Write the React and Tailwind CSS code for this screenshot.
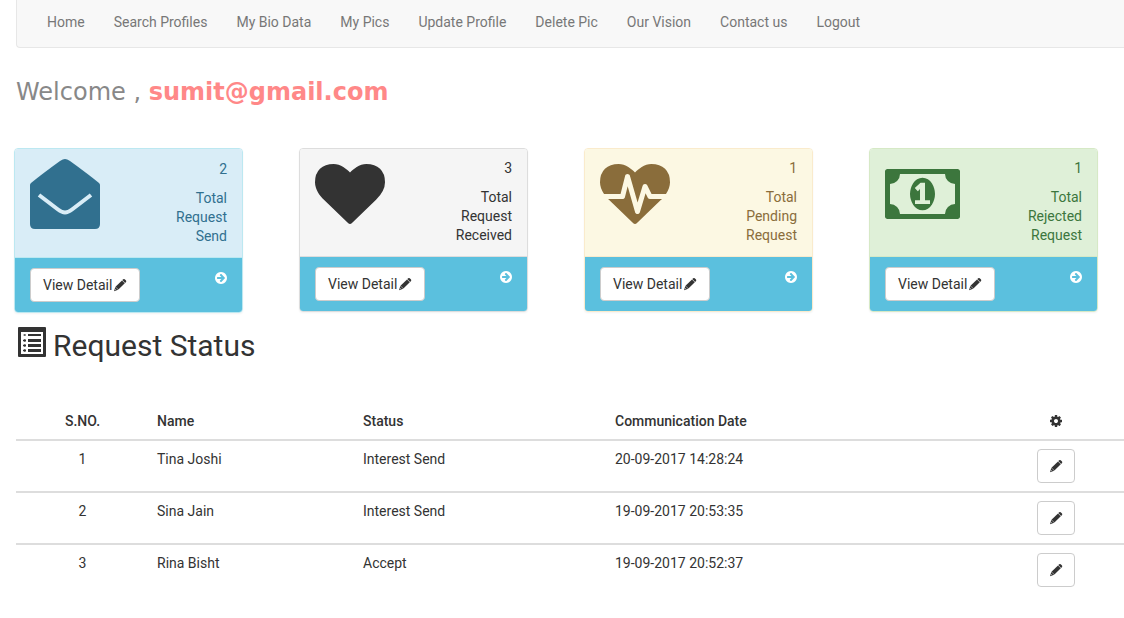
const paths = {
  heart:
    'M896 1664q-26 0-44-18l-624-602q-10-8-27.5-26t-55.5-65.5-68-97.5-53.5-121-23.5-138q0-220 127-344t351-124q62 0 126.5 21.5t120 58 95.5 68.5 76 68q36-36 76-68t95.5-68.5 120-58 126.5-21.5q224 0 351 124t127 344q0 221-229 450l-623 600q-18 18-44 18z',
  heartbeat:
    'M1280 1024h305q-5 6-10 10.5t-9 7.5l-3 4-623 600q-18 18-44 18t-44-18l-624-602q-5-2-21-20h369q22 0 39.5-13.5t22.5-34.5l70-281 190 667q6 20 23 33t39 13q21 0 38-13t23-33l146-485 56 112q18 35 57 35zm512-428q0 145-103 300h-369l-111-221q-8-17-25.5-27t-36.5-8q-45 5-56 46l-129 430-196-686q-6-20-23.5-33t-39.5-13-39 13.5-22 34.5l-116 464h-423q-103-155-103-300q0-220 127-344t351-124q62 0 126.5 21.5t120 58 95.5 68.5 76 68q36-36 76-68t95.5-68.5 120-58 126.5-21.5q224 0 351 124t127 344z',
  money:
    'M768 1152h384v-96h-128v-448h-114l-148 137 77 80q42-37 55-57h2v288h-128v96zm512-256q0 70-21 142t-59.5 134-101.5 101-138 39-138-39-101.5-101-59.5-134-21-142 21-142 59.5-134 101.5-101 138-39 138 39 101.5 101 59.5 134 21 142zm512 256v-512q-106 0-181-75t-75-181h-1152q0 106-75 181t-181 75v512q106 0 181 75t75 181h1152q0-106 75-181t181-75zm128-832v1152q0 26-19 45t-45 19h-1792q-26 0-45-19t-19-45v-1152q0-26 19-45t45-19h1792q26 0 45 19t19 45z',
  arrow:
    'M1413 896q0-27-18-45l-91-91-362-362q-18-18-45-18t-45 18l-91 91q-18 18-18 45t18 45l189 189h-502q-26 0-45 19t-19 45v128q0 26 19 45t45 19h502l-189 189q-18 18-18 45t18 45l91 91q18 18 45 18t45-18l362-362 91-91q18-18 18-45zm251 0q0 209-103 385.5t-279.5 279.5-385.5 103-385.5-103-279.5-279.5-103-385.5 103-385.5 279.5-279.5 385.5-103 385.5 103 279.5 279.5 103 385.5z',
  cog:
    'M1152 896q0-106-75-181t-181-75-181 75-75 181 75 181 181 75 181-75 75-181zm512-109v222q0 12-8 23t-20 13l-185 28q-19 54-39 91 35 50 107 138 10 12 10 25t-9 23q-27 37-99 108t-94 71q-12 0-26-9l-138-108q-44 23-91 38-16 136-29 186-7 28-36 28h-222q-14 0-24.500-8.500t-11.500-21.500l-28-184q-49-16-90-37l-141 107q-10 9-25 9-14 0-25-11-126-114-165-168-7-10-7-23 0-12 8-23 15-21 51-66.500t54-70.500q-27-50-41-99l-183-27q-13-2-21-12.500t-8-23.500v-222q0-12 8-23t19-13l186-28q14-46 39-92-40-57-107-138-10-12-10-24 0-10 9-23 26-36 98.500-107.500t94.500-71.500q13 0 26 10l138 107q44-23 91-38 16-136 29-186 7-28 36-28h222q14 0 24.500 8.500t11.500 21.500l28 184q49 16 90 37l142-107q9-9 24-9 13 0 25 10 129 119 165 170 7 8 7 22 0 12-8 23-15 21-51 66.500t-54 70.500q26 50 41 98l183 28q13 2 21 12.500t8 23.500z',
};

function Icon({ name, width = 1792, className }) {
  return (
    <svg viewBox={`0 0 ${width} 1792`} fill="currentColor" fillRule="evenodd" className={className} aria-hidden="true">
      <path d={paths[name]} />
    </svg>
  );
}

function Pencil() {
  return (
    <svg viewBox="0 0 14 14" fill="currentColor" className="size-3.5" aria-hidden="true">
      <path d="M9.300 2.100L10.200 1.200Q11 .600 11.700 1.200L13 2.500Q13.600 3.200 13 4L12.100 4.900Z" />
      <path d="M9 2.500L11.800 5.300L5.400 11.600L2.500 8.700Z" />
      <path fillRule="evenodd" d="M2.300 8.900L5.200 11.800L1 13.200ZM2.500 11L2.100 12.100L3.200 11.700Z" />
    </svg>
  );
}

function EnvelopeOpen() {
  return (
    <svg viewBox="0 0 70 70" className="size-[70px]" aria-hidden="true">
      <path
        fill="currentColor"
        d="M0 26Q0 25 1 24Q12 15 30 2Q33 0 35 0Q37 0 40 2Q58 15 69 24Q70 25 70 26V65Q70 70 65 70H5Q0 70 0 65Z"
      />
      <path fill="none" stroke="#d9edf7" strokeWidth="4" d="M9 36L28 50.500Q32 53.500 35 53.500Q38 53.500 42 50.500L61 36" />
    </svg>
  );
}

function ListAlt() {
  return (
    <svg viewBox="0 0 28 30" fill="currentColor" className="h-[30px] w-7" aria-hidden="true">
      <path fillRule="evenodd" d="M1 0H27Q28 0 28 1V29Q28 30 27 30H1Q0 30 0 29V1Q0 0 1 0ZM3 5V27H25V5Z" />
      <path d="M5 8l2-1 1 1-1 1zM5 13l2-1 1 1v1l-1 1-2-1zM5 18l2-1 1 1v1l-1 1-2-1zM5 23l2-1 1 1v1l-1 1-2-1z" />
      <path d="M10 7h13v2H10zM10 12h13v3H10zM10 17h13v3H10zM10 22h13v3H10z" />
    </svg>
  );
}

const links = ['Home', 'Search Profiles', 'My Bio Data', 'My Pics', 'Update Profile', 'Delete Pic', 'Our Vision', 'Contact us', 'Logout'];

const cards = [
  { count: 2, words: ['Total', 'Request', 'Send'], tone: 'border-[#bce8f1]', head: 'bg-[#d9edf7] text-[#31708f] border-[#bce8f1]', text: 'pt-px', icon: <EnvelopeOpen /> },
  { count: 3, words: ['Total', 'Request', 'Received'], tone: 'border-[#dddddd]', head: 'bg-[#f5f5f5] text-[#333333] border-[#dddddd]', icon: <Icon name="heart" className="size-[70px]" /> },
  { count: 1, words: ['Total', 'Pending', 'Request'], tone: 'border-[#faebcc]', head: 'bg-[#fcf8e3] text-[#8a6d3b] border-[#faebcc]', icon: <Icon name="heartbeat" className="size-[70px]" /> },
  { count: 1, words: ['Total', 'Rejected', 'Request'], tone: 'border-[#d6e9c6]', head: 'bg-[#dff0d8] text-[#3c763d] border-[#d6e9c6]', icon: <Icon name="money" width={1920} className="h-[70px] w-[75px]" /> },
];

const rows = [
  [1, 'Tina Joshi', 'Interest Send', '20-09-2017 14:28:24'],
  [2, 'Sina Jain', 'Interest Send', '19-09-2017 20:53:35'],
  [3, 'Rina Bisht', 'Accept', '19-09-2017 20:52:37'],
];

function Card({ count, words, tone, head, text = '', icon }) {
  return (
    <section className={`rounded border shadow-xs ${tone}`}>
      <div className={`flex justify-between rounded-t-[3px] border-b px-[15px] pb-[11px] pt-2.5 ${head}`}>
        {icon}
        <div className={`text-right ${text}`}>
          <p className="mb-2.5 leading-[19px]">{count}</p>
          {words.map((word) => (
            <p key={word} className="leading-[19px]">{word}</p>
          ))}
        </div>
      </div>
      <div className="flex items-start justify-between rounded-b-[3px] bg-[#5bc0de] px-[15px] py-2.5">
        <button className="flex h-[34px] items-center gap-px whitespace-nowrap rounded border border-[#cccccc] bg-white px-3">
          View Detail
          <Pencil />
        </button>
        <a href="#detail" aria-label={`${words.join(' ')} detail`} className="mt-[3px] text-white">
          <Icon name="arrow" className="-mr-px size-3.5" />
        </a>
      </div>
    </section>
  );
}

export default function App() {
  return (
    <div className="overflow-x-hidden bg-white pb-5 pl-4 font-[Roboto,sans-serif] text-sm text-[#333333]">
      <nav className="flex h-12 gap-[29px] rounded-bl border-b border-l border-[#e7e7e7] bg-[#f8f8f8] px-[30px] pt-3 leading-5 text-[#777777]">
        {links.map((link) => (
          <a key={link} href="#nav">{link}</a>
        ))}
      </nav>

      <h1 className="mt-7 font-['DejaVu_Sans',sans-serif] text-2xl text-[#888888]">
        Welcome , <strong className="font-bold text-[#ff8888]">sumit@gmail.com</strong>
      </h1>

      <div className="-ml-0.5 mr-[26px] mt-10 grid grid-cols-4 items-start gap-x-14">
        {cards.map((card) => (
          <Card key={card.words.join()} {...card} />
        ))}
      </div>

      <h2 className="mt-3.5 flex items-start gap-[7px] pl-0.5 text-[30px] leading-[38px]">
        <ListAlt />
        Request Status
      </h2>

      <table className="mt-[37px] w-full border-collapse text-left">
        <thead>
          <tr className="h-[38px] border-b-2 border-[#dddddd]">
            <th className="w-[133px] text-center font-medium">S.NO.</th>
            <th className="w-[206px] px-2 font-medium">Name</th>
            <th className="w-[252px] px-2 font-medium">Status</th>
            <th className="px-2 font-medium">Communication Date</th>
            <th className="w-[136px]" aria-label="Actions"><Icon name="cog" className="mx-auto size-3.5" /></th>
          </tr>
        </thead>
        <tbody>
          {rows.map(([id, name, status, date]) => (
            <tr key={id} className="h-[52px] border-b-2 border-[#dddddd] align-top leading-5 last:border-b-0">
              <td className="py-2 text-center">{id}</td>
              <td className="px-2 py-2">{name}</td>
              <td className="px-2 py-2">{status}</td>
              <td className="px-2 py-2">{date}</td>
              <td className="py-2">
                <button aria-label={`Edit ${name}`} className="mx-auto flex h-[34px] w-[38px] items-center justify-center rounded border border-[#cccccc] bg-white">
                  <Pencil />
                </button>
              </td>
            </tr>
          ))}
        </tbody>
      </table>
    </div>
  );
}
